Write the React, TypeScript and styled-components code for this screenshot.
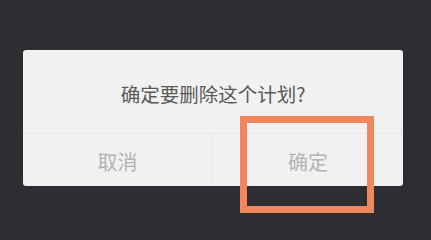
import React from "react";
import styled, { createGlobalStyle } from "styled-components";

const GlobalStyle = createGlobalStyle`
  html, body {
    margin: 0;
    padding: 0;
    background: #2e2d32;
  }
  body {
    font-family: "Noto Sans CJK SC", "Noto Sans", sans-serif;
  }
`;

const Screen = styled.div`
  position: relative;
  width: 431px;
  height: 230px;
  padding: 50px 0 0 23px;
  box-sizing: border-box;
  overflow: hidden;
`;

const Dialog = styled.div`
  width: 380px;
  height: 136px;
  background: #f1f1f1;
  border-radius: 3px;
  display: flex;
  flex-direction: column;
`;

const Message = styled.div`
  height: 83px;
  display: flex;
  align-items: center;
  justify-content: center;
  padding-top: 4px;
  box-sizing: border-box;
  font-size: 19.5px;
  color: #5a5a5a;
`;

const Actions = styled.div`
  flex: 1;
  display: grid;
  grid-template-columns: 190px 1fr;
  border-top: 1px solid #e8e8e8;
`;

const ActionButton = styled.button<{ $divider?: boolean }>`
  appearance: none;
  border: none;
  background: transparent;
  padding: 2px 0 0;
  margin: 0;
  font-family: inherit;
  font-size: 20px;
  color: #b3b3b3;
  display: flex;
  align-items: center;
  justify-content: center;
  border-right: ${(p) => (p.$divider ? "1px solid #e8e8e8" : "none")};
`;

const Highlight = styled.div`
  position: absolute;
  left: 240px;
  top: 116px;
  width: 134px;
  height: 97px;
  border: 7px solid #f2865c;
  box-sizing: border-box;
  pointer-events: none;
`;

export default function App() {
  return (
    <>
      <GlobalStyle />
      <Screen>
        <Dialog>
          <Message>确定要删除这个计划?</Message>
          <Actions>
            <ActionButton $divider>取消</ActionButton>
            <ActionButton>确定</ActionButton>
          </Actions>
        </Dialog>
        <Highlight />
      </Screen>
    </>
  );
}
